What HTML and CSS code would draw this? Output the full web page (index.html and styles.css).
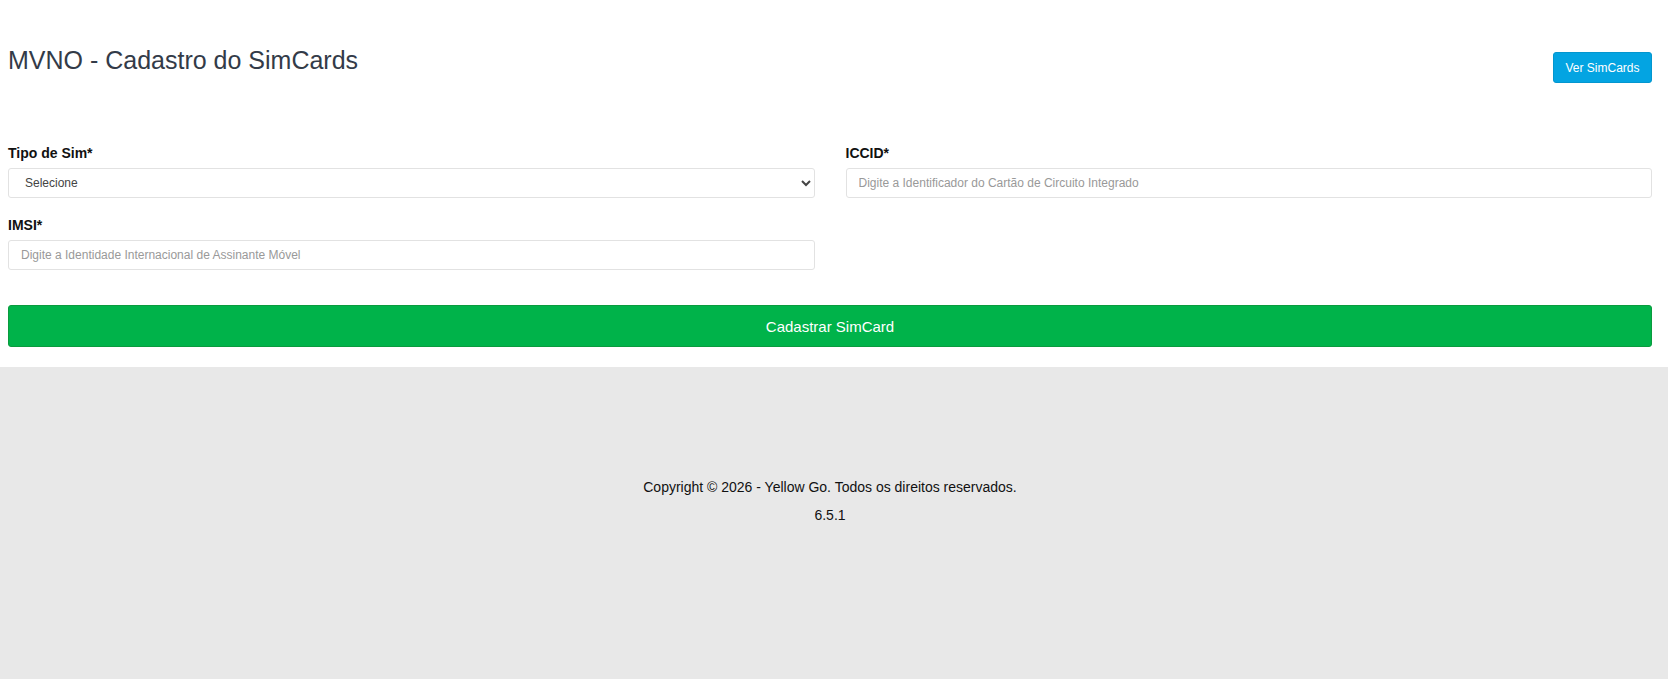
FILE: index.html
```html
<!DOCTYPE html>
<html lang="pt-BR">

<head>
    <meta charset="UTF-8">
    <meta name="viewport" content="width=device-width, initial-scale=1.0">
    <title>MVNO - Cadastro do SimCards</title>
    <link rel="stylesheet" href="styles.css">
</head>

<body>
    <div class="main">
        <div class="header">
            <h1>MVNO - Cadastro do SimCards</h1>
            <button type="button" class="btn-ver">Ver SimCards</button>
        </div>

        <form id="simForm">
            <div class="form-grid">
                <div class="form-group">
                    <label for="tipoSim">Tipo de Sim*</label>
                    <select id="tipoSim" name="tipoSim">
                        <option>Selecione</option>
                    </select>
                </div>

                <div class="form-group">
                    <label for="iccid">ICCID*</label>
                    <input type="text" id="iccid" name="iccid" placeholder="Digite a Identificador do Cartão de Circuito Integrado">
                </div>

                <div class="form-group">
                    <label for="imsi">IMSI*</label>
                    <input type="text" id="imsi" name="imsi" placeholder="Digite a Identidade Internacional de Assinante Móvel">
                </div>
            </div>

            <button type="submit" class="btn-cadastrar">Cadastrar SimCard</button>
        </form>
    </div>

    <footer class="footer">
        <p>Copyright © 2026 - Yellow Go. Todos os direitos reservados.</p>
        <p>6.5.1</p>
    </footer>
</body>

</html>
```

FILE: styles.css
```css
html, body {
    height: 100%;
}

body {
    margin: 0;
    font-family: "Liberation Sans", Arial, sans-serif;
    background-color: #e8e8e8;
    display: flex;
    flex-direction: column;
}

.main {
    background: white;
    padding: 0 16px 20px 8px;
}

.header {
    display: flex;
    justify-content: space-between;
    align-items: flex-start;
    height: 145px;
}

.header h1 {
    margin: 46px 0 0 0;
    font-size: 25px;
    font-weight: normal;
    color: #333b48;
}

.btn-ver {
    margin-top: 52px;
    width: 99px;
    height: 31px;
    background-color: #03a4e2;
    color: white;
    border: 1px solid #0396cf;
    border-radius: 3px;
    font-family: inherit;
    font-size: 12px;
    cursor: pointer;
}

.form-grid {
    display: grid;
    grid-template-columns: 1fr 1fr;
    column-gap: 31px;
    row-gap: 19px;
}

.form-group label {
    display: block;
    margin-bottom: 7px;
    font-size: 14px;
    font-weight: bold;
    color: #111;
}

.form-group input,
.form-group select {
    display: block;
    width: 100%;
    height: 30px;
    box-sizing: border-box;
    border: 1px solid #e2e2e2;
    border-radius: 3px;
    background-color: #fff;
    font-family: inherit;
    font-size: 12px;
    color: #444;
}

.form-group input {
    padding: 0 12px;
}

.form-group select {
    padding: 0 12px;
}

.form-group input::placeholder {
    color: #999;
}

.btn-cadastrar {
    display: block;
    width: 100%;
    height: 42px;
    margin-top: 35px;
    background-color: #00b34a;
    color: white;
    border: 1px solid #0a9b3e;
    border-radius: 3px;
    font-family: inherit;
    font-size: 15px;
    cursor: pointer;
}

.footer {
    flex: 1;
    padding: 112px 16px 0 8px;
    text-align: center;
    font-size: 14px;
    color: #111;
}

.footer p {
    margin: 0 0 12px 0;
}
```
